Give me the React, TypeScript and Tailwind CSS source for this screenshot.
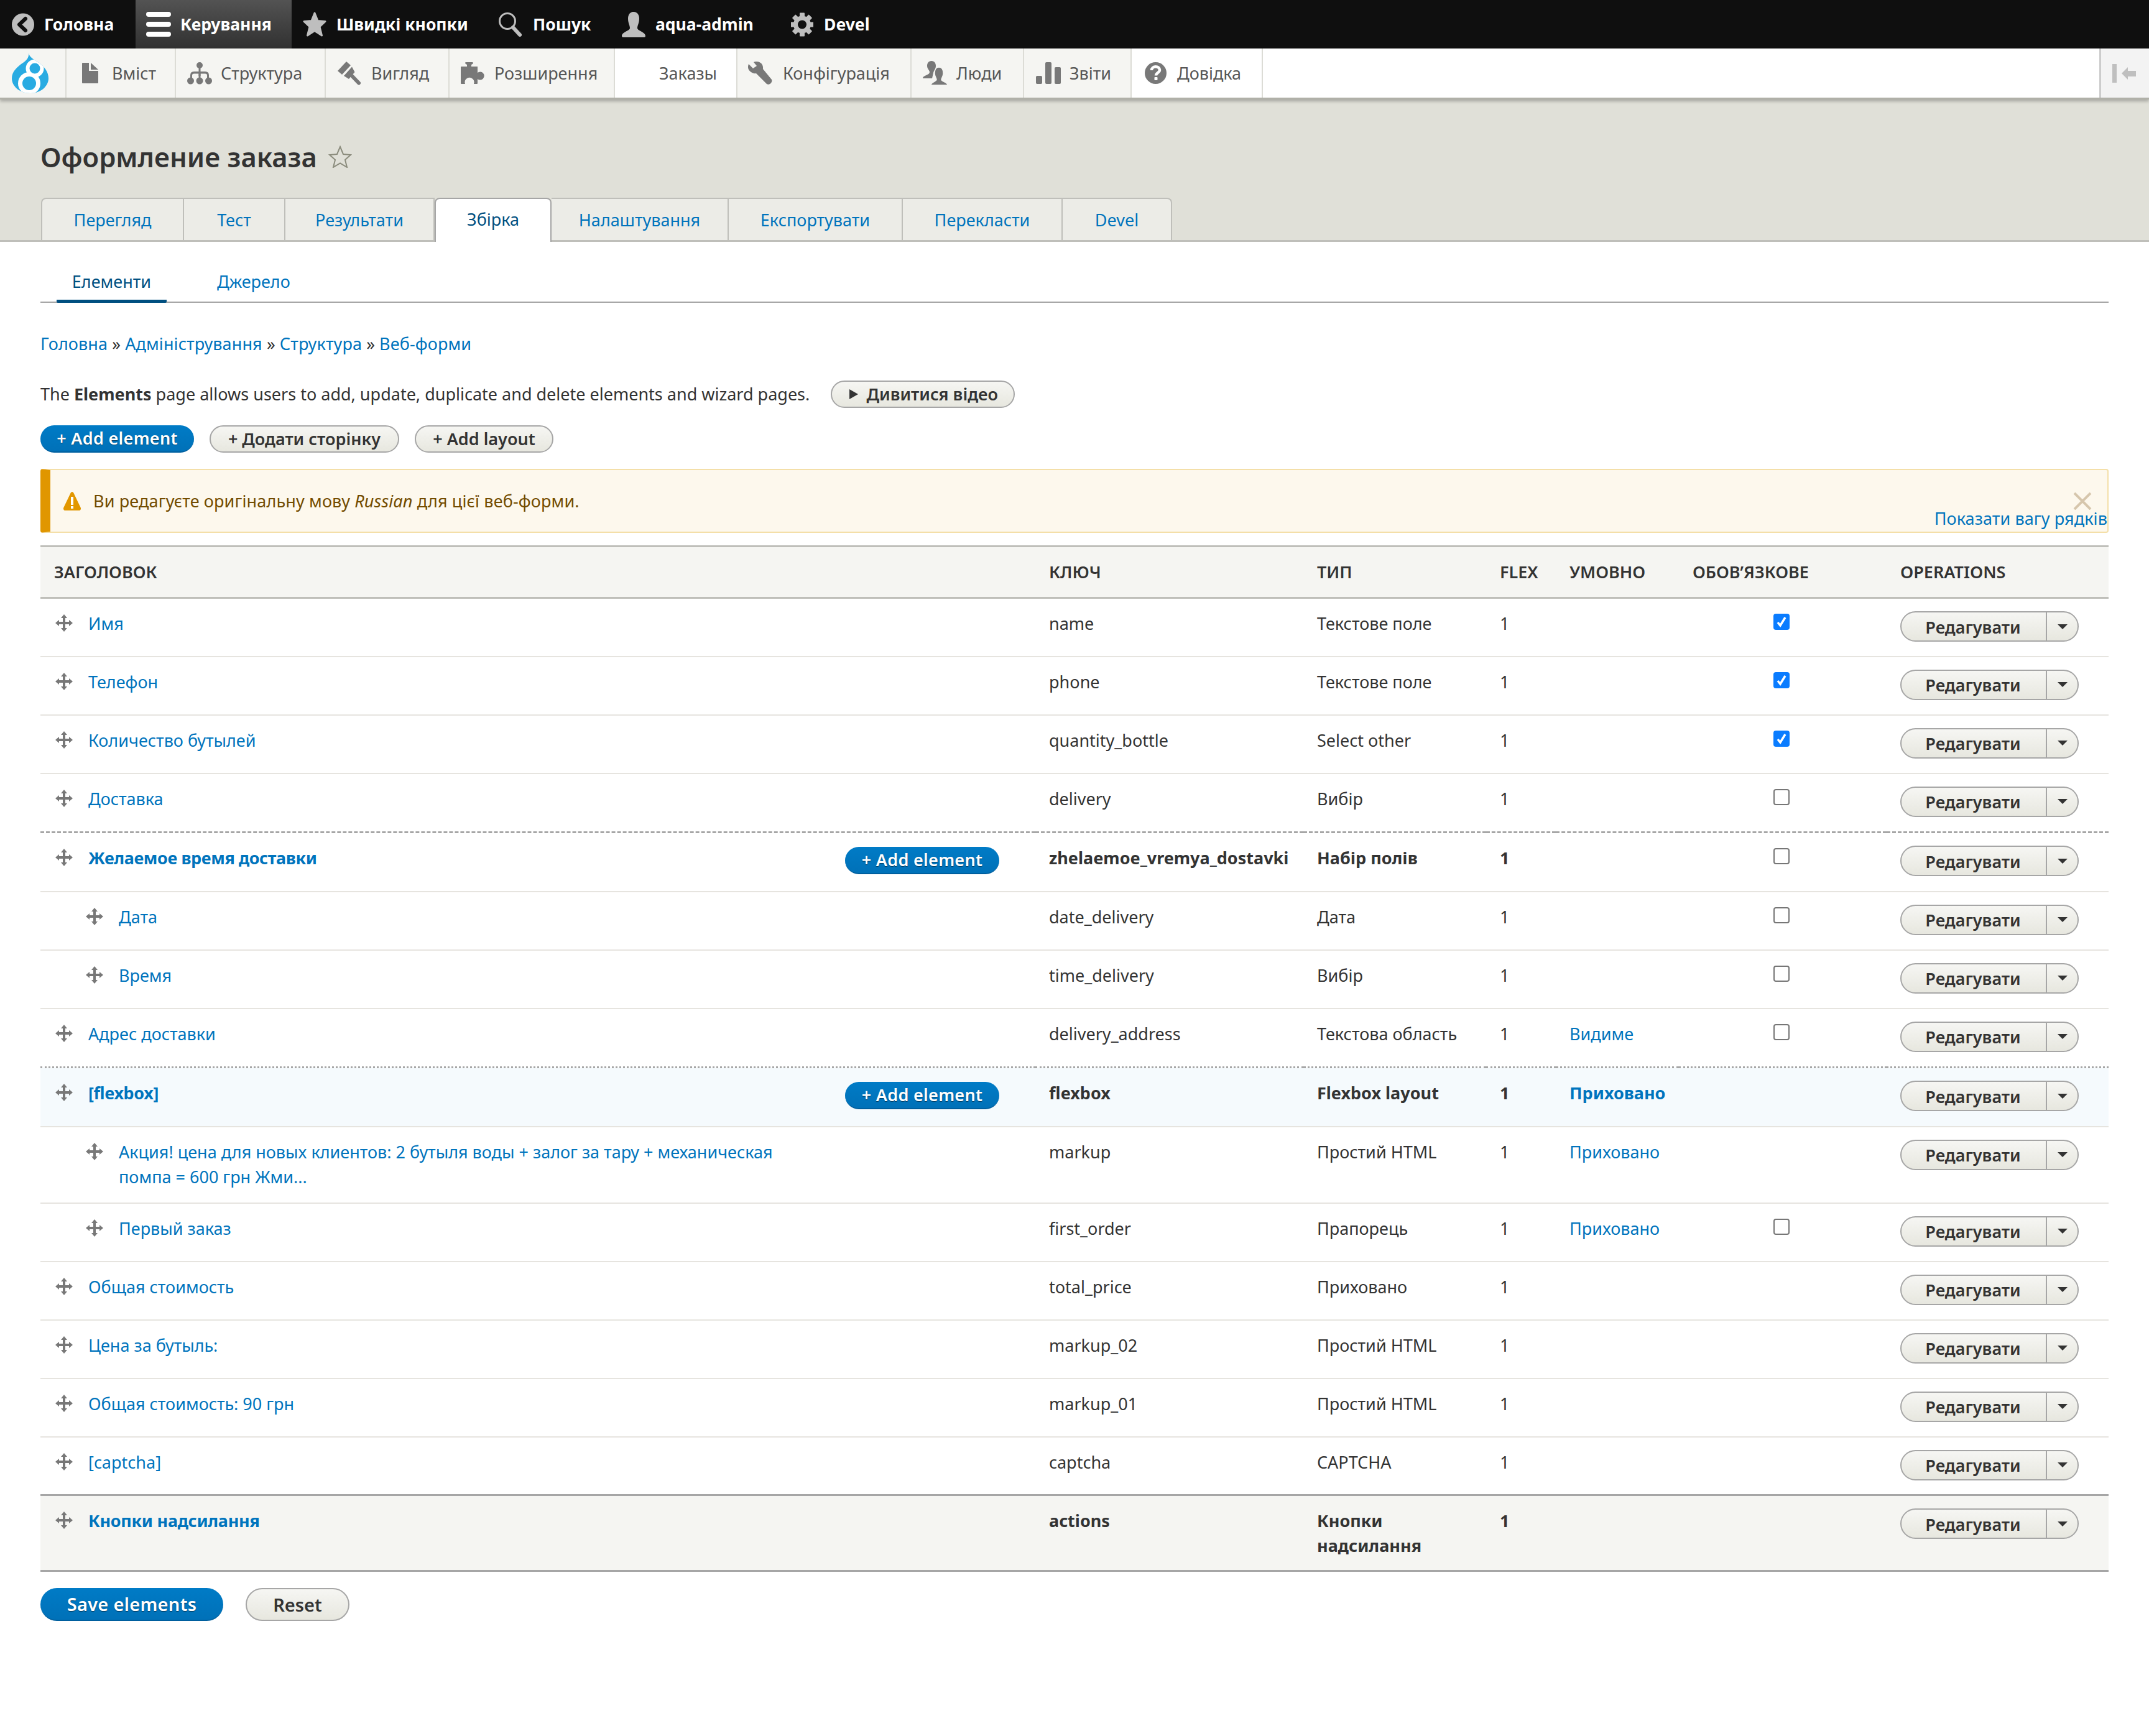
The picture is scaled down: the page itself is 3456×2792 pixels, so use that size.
import React from "react";

const Ico = ({ w, h, vb, children, cls = "" }: { w: number; h: number; vb: string; children: React.ReactNode; cls?: string }) => (
  <svg width={w} height={h} viewBox={vb} className={"shrink-0 " + cls}>{children}</svg>
);

const G = "#bebebe";
const D = "#787878";

const BackI = () => <Ico w={36} h={37} vb="0 0 36 37"><circle cx="18" cy="18.5" r="18" fill={G} /><path d="M22 9 L12 18.5 L22 28" fill="none" stroke="#0f0f0f" strokeWidth="6" strokeLinecap="round" strokeLinejoin="round" /></Ico>;
const BurgerI = () => <Ico w={40} h={40} vb="0 0 40 40"><rect y="0" width="40" height="8" rx="4" fill="#fff" /><rect y="16" width="40" height="8" rx="4" fill="#fff" /><rect y="32" width="40" height="8" rx="4" fill="#fff" /></Ico>;
const StarI = () => <Ico w={38} h={40} vb="0 0 38 40"><path d="M19 2 L24 14.5 L36 15.5 L27 24 L30.5 38 L19 30.5 L7.5 38 L11 24 L2 15.5 L14 14.5Z" fill={G} stroke={G} strokeWidth="3" strokeLinejoin="round" /></Ico>;
const SearchI = () => <Ico w={37} h={40} vb="0 0 37 40"><circle cx="14" cy="15" r="12.5" fill="none" stroke={G} strokeWidth="3" /><path d="M23 25 L34 37" stroke={G} strokeWidth="6" strokeLinecap="round" /></Ico>;
const PersonI = () => <Ico w={38} h={41} vb="0 0 38 41"><path d="M19 0 C25 0 28 5 28 11 C28 18 25 22 25 26 C25 31 38 32 38 39 Q38 41 36 41 H2 Q0 41 0 39 C0 32 13 31 13 26 C13 22 10 18 10 11 C10 5 13 0 19 0Z" fill={G} /></Ico>;
const GearI = () => (
  <Ico w={36} h={39} vb="0 0 36 39">
    <g fill={G}>
      {[0, 45, 90, 135].map((a) => <rect key={a} x="14" y="0.5" width="8" height="38" rx="1" transform={`rotate(${a} 18 19.5)`} />)}
    </g>
    <circle cx="18" cy="19.5" r="11" fill="none" stroke={G} strokeWidth="6" />
    <circle cx="18" cy="19.5" r="7" fill="#0f0f0f" />
  </Ico>
);
const FileI = () => <Ico w={26} h={33} vb="0 0 26 33"><path d="M1 0 H11 V13 H26 V32 Q26 33 25 33 H1 Q0 33 0 32 V1 Q0 0 1 0Z M14 0 L26 11 H14Z" fill={D} /></Ico>;
const TreeI = () => (
  <Ico w={40} h={36} vb="0 0 40 36">
    <g fill={D}>
      <circle cx="20" cy="5" r="5" /><rect x="18.5" y="8" width="3" height="14" />
      <path d="M5 26 V21 Q5 15 11 15 H29 Q35 15 35 21 V26 H32 V21 Q32 18.5 29 18.5 H11 Q8 18.5 8 21 V26Z" />
      <rect x="18.5" y="16" width="3" height="10" />
      <circle cx="5.5" cy="30" r="5.5" /><circle cx="20" cy="30" r="5.5" /><circle cx="34.5" cy="30" r="5.5" />
    </g>
  </Ico>
);
const BrushI = () => (
  <Ico w={38} h={38} vb="0 0 38 38">
    <path d="M14 0 L0 15 L7 21 L21 6Z" fill={D} />
    <path d="M23 8.5 L10 23 L18 28 L27.5 17Z" fill={D} />
    <path d="M22 22 L34 34.5" stroke={D} strokeWidth="6" strokeLinecap="round" />
  </Ico>
);
const PuzzleI = () => <Ico w={40} h={35} vb="0 0 40 35"><path d="M1 7 H10 V4 Q7 3 7 1 Q7 0 9 0 H18 Q20 0 20 1 Q20 3 17 4 V7 H27 V17 A6.5 6.5 0 1 1 27 27 V34 Q27 35 26 35 H21 A7.5 7.5 0 1 0 7 35 H1 Q0 35 0 34 V8 Q0 7 1 7Z" fill={D} /></Ico>;
const WrenchI = () => <Ico w={39} h={38} vb="0 0 39 38"><path d="M14 0 C20 0 25 5 24 12 L38 29 C40 33 34 39 30 36 L13 19 C7 20 0 15 0 9 C0 7 0.5 5 1 4 L8 11 L14 7 L9 1 C10 0 12 0 14 0Z" fill={D} /></Ico>;
const PeopleI = () => (
  <Ico w={40} h={39} vb="0 0 40 39">
    <path d="M14 0 C19 0 21 4 21 8 C21 13 18 15 17 19 L15 28 H0 C0 23 11 23 11 18 C11 15 7 13 7 8 C7 4 9 0 14 0Z" fill={D} />
    <path d="M26 10 C31 10 33 15 33 20 C33 25 30 28 30 30 C30 33 40 34 40 39 H13 C13 34 22 33 22 30 C22 28 19 25 19 20 C19 15 21 10 26 10Z" fill={D} stroke="#f5f5f2" strokeWidth="1.5" />
  </Ico>
);
const BarsI = () => <Ico w={40} h={35} vb="0 0 40 35"><g fill={D}><rect x="0" y="22" width="10" height="13" rx="2" /><rect x="15" y="0" width="10" height="35" rx="2" /><rect x="30" y="8" width="10" height="27" rx="2" /></g></Ico>;
const HelpI = () => (
  <Ico w={35} h={35} vb="0 0 35 35">
    <circle cx="17.5" cy="17.5" r="17.5" fill={D} />
    <path d="M11 13 C11 5.5 24 5.5 24 12.5 C24 17 18 17 18 21.5" fill="none" stroke="#fff" strokeWidth="4.5" />
    <rect x="15.5" y="24" width="5" height="5" rx="1" fill="#fff" />
  </Ico>
);
const DrupalI = () => (
  <Ico w={59} h={65} vb="0 0 59 65">
    <defs>
      <clipPath id="drop"><path d="M27 0 C28 7 35 10 42 15 C53 22 59 31 59 41 C59 54 46 65 30 65 C13 65 0 54 0 41 C0 30 9 22 18 16 C24 12 28 7 27 0Z" /></clipPath>
    </defs>
    <g clipPath="url(#drop)">
      <rect width="59" height="65" fill="#29abe2" />
      <circle cx="37" cy="25" r="14.5" fill="#fff" />
      <circle cx="28" cy="49" r="18" fill="#fff" />
      <circle cx="37" cy="25" r="8.5" fill="#29abe2" />
      <circle cx="28" cy="49" r="11" fill="#29abe2" />
    </g>
  </Ico>
);
const Handle = () => (
  <svg width="28" height="28" viewBox="0 0 28 28" className="shrink-0">
    <path d="M14 0 L19 6 H16 V12 H22 V9 L28 14 L22 19 V16 H16 V22 H19 L14 28 L9 22 H12 V16 H6 V19 L0 14 L6 9 V12 H12 V6 H9Z" fill={D} />
  </svg>
);

const topItems = [
  { label: "Головна", icon: <BackI />, cls: "w-[218px] pl-[19px] gap-[16px]" },
  { label: "Керування", icon: <BurgerI />, cls: "w-[251px] pl-[17px] gap-[15px] bg-gradient-to-b from-[#535353] to-[#313131]" },
  { label: "Швидкі кнопки", icon: <StarI />, cls: "w-[298px] pl-[18px] gap-[16px]" },
  { label: "Пошук", icon: <SearchI />, cls: "w-[198px] pl-[35px] gap-[18px]" },
  { label: "aqua-admin", icon: <PersonI />, cls: "w-[272px] pl-[35px] gap-[16px]" },
  { label: "Devel", icon: <GearI />, cls: "w-[180px] pl-[35px] gap-[17px]" },
];

const adminItems = [
  { label: "Вміст", icon: <FileI />, cls: "w-[176px] pl-[25px] gap-[22px]" },
  { label: "Структура", icon: <TreeI />, cls: "w-[241px] pl-[18px] gap-[14px]" },
  { label: "Вигляд", icon: <BrushI />, cls: "w-[199px] pl-[19px] gap-[16px]" },
  { label: "Розширення", icon: <PuzzleI />, cls: "w-[266px] pl-[18px] gap-[14px]" },
  { label: "Заказы", icon: null, cls: "w-[197px] pl-[71px] bg-white" },
  { label: "Конфігурація", icon: <WrenchI />, cls: "w-[280px] pl-[17px] gap-[17px]" },
  { label: "Люди", icon: <PeopleI />, cls: "w-[181px] pl-[18px] gap-[14px]" },
  { label: "Звіти", icon: <BarsI />, cls: "w-[173px] pl-[19px] gap-[14px]" },
  { label: "Довідка", icon: <HelpI />, cls: "w-[211px] pl-[21px] gap-[17px] bg-white" },
];

const tabs = [
  { label: "Перегляд", cls: "w-[230px]" },
  { label: "Тест", cls: "w-[163px]" },
  { label: "Результати", cls: "w-[240px]" },
  { label: "Збірка", cls: "w-[188px]", active: true },
  { label: "Налаштування", cls: "w-[285px]" },
  { label: "Експортувати", cls: "w-[280px]" },
  { label: "Перекласти", cls: "w-[257px]" },
  { label: "Devel", cls: "w-[176px]" },
];

type Row = {
  t: string; k: string; ty: string; cond?: string; req?: boolean | null; indent?: boolean; bold?: boolean; add?: boolean;
  rowCls: string; two?: string;
};

const plain = "h-[94px] border-b-2 border-[#e6e4df]";
const rows: Row[] = [
  { t: "Имя", k: "name", ty: "Текстове поле", req: true, rowCls: plain },
  { t: "Телефон", k: "phone", ty: "Текстове поле", req: true, rowCls: plain },
  { t: "Количество бутылей", k: "quantity_bottle", ty: "Select other", req: true, rowCls: plain },
  { t: "Доставка", k: "delivery", ty: "Вибір", req: false, rowCls: "h-[95px] border-b-[3px] border-dashed border-[#a6a6a6]" },
  { t: "Желаемое время доставки", k: "zhelaemoe_vremya_dostavki", ty: "Набір полів", req: false, bold: true, add: true, rowCls: "h-[95px] border-b-2 border-[#e6e4df]" },
  { t: "Дата", k: "date_delivery", ty: "Дата", req: false, indent: true, rowCls: plain },
  { t: "Время", k: "time_delivery", ty: "Вибір", req: false, indent: true, rowCls: plain },
  { t: "Адрес доставки", k: "delivery_address", ty: "Текстова область", cond: "Видиме", req: false, rowCls: "h-[95px] border-b-[3px] border-dotted border-[#a6a6a6]" },
  { t: "[flexbox]", k: "flexbox", ty: "Flexbox layout", cond: "Приховано", bold: true, add: true, rowCls: "h-[95px] border-b-2 border-[#e6e4df] bg-[#f5fafd]" },
  { t: "Акция! цена для новых клиентов: 2 бутыля воды + залог за тару + механическая", two: "помпа = 600 грн Жми...", k: "markup", ty: "Простий HTML", cond: "Приховано", indent: true, rowCls: "h-[123px] border-b-2 border-[#e6e4df]" },
  { t: "Первый заказ", k: "first_order", ty: "Прапорець", cond: "Приховано", req: false, indent: true, rowCls: plain },
  { t: "Общая стоимость", k: "total_price", ty: "Приховано", rowCls: plain },
  { t: "Цена за бутыль:", k: "markup_02", ty: "Простий HTML", rowCls: plain },
  { t: "Общая стоимость: 90 грн", k: "markup_01", ty: "Простий HTML", rowCls: plain },
  { t: "[captcha]", k: "captcha", ty: "CAPTCHA", rowCls: "h-[94px]" },
];

const LINK = "text-[#0074bd]";
const BTN = "inline-flex items-center justify-center rounded-full border-2 border-[#a6a6a6] bg-gradient-to-b from-[#f6f6f3] to-[#e7e7df] text-[#333] font-semibold";
const BLUE = "inline-flex items-center justify-center rounded-full bg-gradient-to-b from-[#007bc6] to-[#0071b8] border-b-2 border-[#005f9e] text-white font-semibold tracking-[0.3px] [text-shadow:0_1px_1px_rgba(0,0,0,0.5)]";

const Check = ({ on }: { on: boolean }) =>
  on ? (
    <span className="ml-[130px] mt-[4px] flex h-[26px] w-[26px] items-center justify-center rounded-[4px] bg-[#0a7cff]">
      <svg width="18" height="18" viewBox="0 0 18 18"><path d="M3 10 L7 15 L15 2" fill="none" stroke="#fff" strokeWidth="3.5" /></svg>
    </span>
  ) : (
    <span className="ml-[130px] mt-[4px] block h-[26px] w-[26px] rounded-[4px] border-2 border-[#767676] bg-white" />
  );

const Edit = () => (
  <div className="flex h-[49px] w-[287px] rounded-full border-2 border-[#a6a6a6] bg-gradient-to-b from-[#f6f6f3] to-[#e7e7df] text-[#333] font-semibold">
    <span className="flex flex-1 items-center justify-center pt-[2px] pr-[2px]">Редагувати</span>
    <span className="flex w-[51px] items-center justify-center border-l-2 border-[#a6a6a6]">
      <span className="h-0 w-0 border-x-[8px] border-t-[8px] border-x-transparent border-t-[#333]" />
    </span>
  </div>
);

const Td = ({ children, cls = "" }: { children?: React.ReactNode; cls?: string }) => (
  <td className={"pl-[22px] pt-[20px] align-top " + cls}>{children}</td>
);

const RowView = ({ r }: { r: Row }) => {
  const weight = r.bold ? "font-bold" : "";
  return (
    <tr className={r.rowCls}>
      <Td>
        <div className={"flex items-start " + (r.indent ? "pl-[51px]" : "pl-[2px]")}>
          <span className="mr-[25px] mt-[5px]"><Handle /></span>
          <a className={"leading-[40px] " + LINK + " " + weight + (r.bold ? " tracking-[-0.4px]" : "")}>
            {r.t}
            {r.two ? <br /> : null}
            {r.two}
          </a>
          {r.add ? <span className={BLUE + " ml-auto mr-[58px] mt-[2px] h-[44px] w-[248px]"}>+ Add element</span> : null}
        </div>
      </Td>
      <Td cls={weight + " leading-[40px]"}>{r.k}</Td>
      <Td cls={weight + " leading-[40px]"}>{r.ty}</Td>
      <Td cls={weight + " leading-[40px]"}>1</Td>
      <Td cls={"leading-[40px] " + LINK + " " + weight}>{r.cond}</Td>
      <Td>{r.req === undefined || r.req === null ? null : <Check on={r.req} />}</Td>
      <Td><Edit /></Td>
    </tr>
  );
};

export default function App() {
  return (
    <div className="min-h-[2792px] w-[3456px] bg-white font-['Noto_Sans','DejaVu_Sans',sans-serif] text-[27px] leading-[40px] text-[#333]">
      <nav className="flex h-[78px] bg-[#0f0f0f] text-[26.5px] font-bold text-white">
        {topItems.map((i) => (
          <a key={i.label} className={"flex h-full items-center " + i.cls}>
            {i.icon}
            <span>{i.label}</span>
          </a>
        ))}
      </nav>
      <nav className="relative z-10 flex h-[82px] border-b-[3px] border-[#b0b0a8] bg-white text-[#565656] shadow-[0_3px_5px_rgba(0,0,0,0.25)]">
        <div className="flex w-[107px] items-center justify-center border-r-2 border-[#dcdcd6] bg-[#f5f5f2] pr-[8px]"><DrupalI /></div>
        {adminItems.map((i) => (
          <a key={i.label} className={"flex items-center border-r-2 border-[#dcdcd6] bg-[#f5f5f2] " + i.cls}>
            {i.icon}
            <span>{i.label}</span>
          </a>
        ))}
        <div className="ml-auto flex w-[80px] items-center gap-[8px] border-l-[3px] border-[#cccccc] bg-[#f3f3f3] pl-[18px]">
          <span className="h-[30px] w-[7px] bg-[#bfbfbf]" />
          <svg width="23" height="20" viewBox="0 0 23 20"><path d="M0 10 L10 0 V6 H23 V15 H10 V20Z" fill="#bfbfbf" /></svg>
        </div>
      </nav>

      <header className="h-[229px] border-b-[3px] border-[#bfbfba] bg-[#e0e0d8] pl-[65px]">
        <div className="flex h-[158px] items-center gap-[18px] pt-[26px]">
          <h1 className="text-[43.5px] font-semibold leading-[56px] text-[#333]">Оформление заказа</h1>
          <svg width="38" height="36" viewBox="0 0 38 36"><path d="M19 2 L24 14 L36 15 L27 23 L30 35 L19 28.5 L8 35 L11 23 L2 15 L14 14Z" fill="none" stroke="#8b8c7d" strokeWidth="2" /></svg>
        </div>
        <div className="flex h-[69px] pl-[1px]">
          {tabs.map((t, n) => (
            <a
              key={t.label}
              className={
                "flex items-center justify-center " + t.cls + " " +
                (t.active
                  ? "relative z-10 h-[71px] rounded-t-[8px] border-x-2 border-t-2 border-[#a6a6a6] bg-white pb-[4px] text-[#004f80]"
                  : "h-[68px] border-t-2 border-r-2 border-[#bfbfba] bg-[#ecece7] pt-[1px] " + LINK + " " + (n === 0 ? "rounded-tl-[8px] border-l-2 " : "") + (n === tabs.length - 1 ? "rounded-tr-[8px]" : ""))
              }
            >
              {t.label}
            </a>
          ))}
        </div>
      </header>

      <main className="px-[65px]">
        <div className="mt-[44px] flex h-[54px] border-b-2 border-[#a6a6a6] pl-[26px]">
          <a className="h-[54px] w-[177px] rounded-b-[2px] border-b-[5px] border-[#004f80] text-center text-[#004f80]">Елементи</a>
          <a className={"ml-[81px] " + LINK}>Джерело</a>
        </div>
        <div className="mt-[46px] h-[40px] tracking-[0.1px]">
          <a className={LINK}>Головна</a> » <a className={LINK}>Адміністрування</a> » <a className={LINK}>Структура</a> » <a className={LINK}>Веб-форми</a>
        </div>
        <div className="mt-[38px] flex h-[46px] items-center">
          <span>The <b>Elements</b> page allows users to add, update, duplicate and delete elements and wizard pages.</span>
          <span className={BTN + " ml-[34px] h-[44px] w-[296px] gap-[12px]"}>
            <svg width="18" height="18" viewBox="0 0 18 18"><path d="M2 1 L16 9 L2 17Z" fill="#333" /></svg>
            Дивитися відео
          </span>
        </div>
        <div className="mt-[27px] flex h-[44px] gap-[25px]">
          <span className={BLUE + " w-[247px]"}>+ Add element</span>
          <span className={BTN + " w-[305px]"}>+ Додати сторінку</span>
          <span className={BTN + " w-[223px]"}>+ Add layout</span>
        </div>
        <div className="relative mt-[26px] flex h-[103px] items-center rounded-[4px] border-2 border-l-[16px] border-[#f4dfa8] border-l-[#e09600] bg-[#fdf8ed] pl-[21px] text-[#734c00]">
          <svg width="28" height="30" viewBox="0 0 28 30" className="mr-[20px] shrink-0">
            <path d="M14 0 C15 0 16 1 16.5 2 L27.5 25 C29 28 27 30 25 30 H3 C1 30 -1 28 0.5 25 L11.5 2 C12 1 13 0 14 0Z" fill="#e29700" />
            <rect x="12" y="8" width="4" height="13" fill="#fff" /><rect x="12" y="23" width="4" height="4" fill="#fff" />
          </svg>
          <span className="tracking-[0.14px]">Ви редагуєте оригінальну мову <i>Russian</i> для цієї веб-форми.</span>
          <svg width="30" height="28" viewBox="0 0 30 28" className="absolute right-[25px] top-[36px]"><path d="M2 1 L28 27 M28 1 L2 27" stroke="#d6c6ac" strokeWidth="4" /></svg>
          <a className={"absolute right-0 top-[58px] tracking-[0.1px] " + LINK}>Показати вагу рядків</a>
        </div>

        <table className="mt-[20px] w-[3326px] table-fixed">
          <colgroup>
            <col className="w-[1600px]" /><col className="w-[431px]" /><col className="w-[294px]" /><col className="w-[112px]" /><col className="w-[198px]" /><col className="w-[334px]" /><col className="w-[357px]" />
          </colgroup>
          <thead>
            <tr className="h-[83px] border-y-[3px] border-[#bfbfba] bg-[#f5f5f2] text-left font-semibold uppercase">
              {["Заголовок", "Ключ", "Тип", "Flex", "Умовно", "Обов’язкове", "Operations"].map((h) => (
                <th key={h} className="pl-[22px] font-semibold">{h}</th>
              ))}
            </tr>
          </thead>
          <tbody>
            {rows.map((r) => <RowView key={r.k} r={r} />)}
            <tr className="h-[122px] border-y-[3px] border-[#a6a6a6] bg-[#f5f5f2] font-bold">
              <Td>
                <div className="flex items-start pl-[2px]">
                  <span className="mr-[25px] mt-[5px]"><Handle /></span>
                  <a className={"tracking-[-0.3px] " + LINK}>Кнопки надсилання</a>
                </div>
              </Td>
              <Td>actions</Td>
              <Td>Кнопки<br />надсилання</Td>
              <Td>1</Td>
              <Td />
              <Td />
              <Td><Edit /></Td>
            </tr>
          </tbody>
        </table>

        <div className="mt-[26px] flex gap-[36px]">
          <span className={BLUE + " h-[53px] w-[294px] text-[29px]"}>Save elements</span>
          <span className={BTN + " h-[53px] w-[167px] text-[29px]"}>Reset</span>
        </div>
      </main>
    </div>
  );
}
